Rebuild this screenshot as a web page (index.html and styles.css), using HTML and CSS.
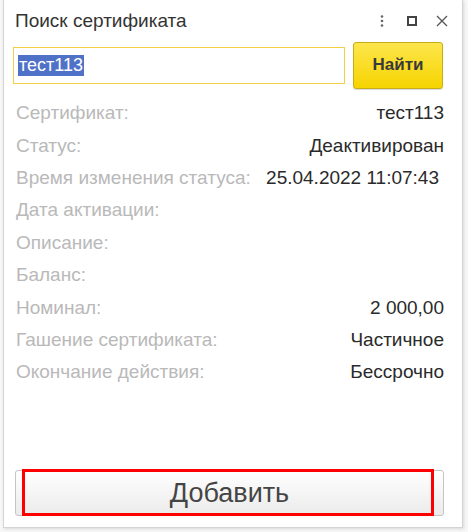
FILE: index.html
```html
<!DOCTYPE html>
<html lang="ru">
<head>
<meta charset="utf-8">
<title>Поиск сертификата</title>
<link rel="stylesheet" href="styles.css">
</head>
<body>
<div class="window">
  <div class="header">
    <div class="title">Поиск сертификата</div>
    <div class="tools">
      <svg class="ico" width="12" height="14" viewBox="0 0 12 14"><circle cx="6" cy="2.5" r="1.3" fill="#666"/><circle cx="6" cy="7" r="1.3" fill="#666"/><circle cx="6" cy="11.5" r="1.3" fill="#666"/></svg>
      <svg class="ico" width="12" height="14" viewBox="0 0 12 14"><rect x="2" y="3" width="8" height="8" fill="none" stroke="#444" stroke-width="2"/></svg>
      <svg class="ico" width="12" height="14" viewBox="0 0 12 14"><path d="M1 2 L11 12 M11 2 L1 12" stroke="#555" stroke-width="1.3" fill="none"/></svg>
    </div>
  </div>
  <div class="search">
    <div class="input"><span class="sel">тест113</span></div>
    <div class="find">Найти</div>
  </div>
  <div class="rows">
    <div class="row"><span class="label">Сертификат:</span><span class="value">тест113</span></div>
    <div class="row"><span class="label">Статус:</span><span class="value">Деактивирован</span></div>
    <div class="row"><span class="label">Время изменения статуса:</span><span class="value shift">25.04.2022 11:07:43</span></div>
    <div class="row"><span class="label">Дата активации:</span><span class="value"></span></div>
    <div class="row"><span class="label">Описание:</span><span class="value"></span></div>
    <div class="row"><span class="label">Баланс:</span><span class="value"></span></div>
    <div class="row"><span class="label">Номинал:</span><span class="value">2 000,00</span></div>
    <div class="row"><span class="label">Гашение сертификата:</span><span class="value">Частичное</span></div>
    <div class="row"><span class="label">Окончание действия:</span><span class="value">Бессрочно</span></div>
  </div>
  <div class="footer">
    <div class="add">Добавить</div>
    <div class="mark"></div>
  </div>
</div>
</body>
</html>
```
FILE: styles.css
```css
html, body {
  margin: 0;
  padding: 0;
}
body {
  width: 468px;
  height: 532px;
  background: #f7f7f7;
  font-family: "Liberation Sans", Arial, sans-serif;
  overflow: hidden;
}
.window {
  margin-left: 3px;
  width: 458px;
  height: 527px;
  background: #fff;
  border: 1px solid #d4d4d4;
  border-top: none;
  box-shadow: 1px 1px 3px rgba(0,0,0,0.12);
  display: flex;
  flex-direction: column;
}
.header {
  height: 41px;
  display: flex;
  align-items: center;
  justify-content: space-between;
  padding: 0 14px 0 11px;
}
.title {
  font-size: 19px;
  color: #333;
}
.tools {
  display: flex;
  gap: 18px;
  align-items: center;
}
.search {
  display: flex;
  align-items: center;
  padding: 0 0 0 9px;
  height: 48px;
}
.input {
  width: 326px;
  height: 35px;
  border: 1px solid #f2cf45;
  display: flex;
  align-items: center;
  padding-left: 4px;
  box-sizing: content-box;
}
.sel {
  background: #4f72c8;
  color: #fff;
  font-size: 18px;
  line-height: 21px;
  padding: 0 1px;
}
.find {
  margin-left: 8px;
  width: 88px;
  height: 45px;
  border: 1px solid #c7ad18;
  border-radius: 3px;
  background: linear-gradient(#fde64c, #f6d400);
  box-shadow: 0 1px 1px rgba(0,0,0,0.15);
  display: flex;
  align-items: center;
  justify-content: center;
  font-size: 17px;
  font-weight: bold;
  color: #3a3a3a;
}
.rows {
  padding: 8px 18px 0 12px;
}
.row {
  height: 32.4px;
  display: flex;
  align-items: center;
  justify-content: space-between;
  font-size: 19px;
}
.label {
  color: #b9b9b9;
}
.value {
  color: #2a2a2a;
}
.shift {
  margin-right: 5px;
}
.footer {
  margin-top: auto;
  padding: 0 18px 11px 11px;
  position: relative;
}
.add {
  height: 44px;
  border: 1px solid #c4c4c4;
  border-radius: 3px;
  background: linear-gradient(#ffffff, #ebebeb);
  display: flex;
  align-items: center;
  justify-content: center;
  font-size: 27px;
  color: #454545;
}
.mark {
  position: absolute;
  left: 18px;
  right: 28px;
  top: -1px;
  bottom: 11px;
  border: 3px solid #ff0000;
}
```
